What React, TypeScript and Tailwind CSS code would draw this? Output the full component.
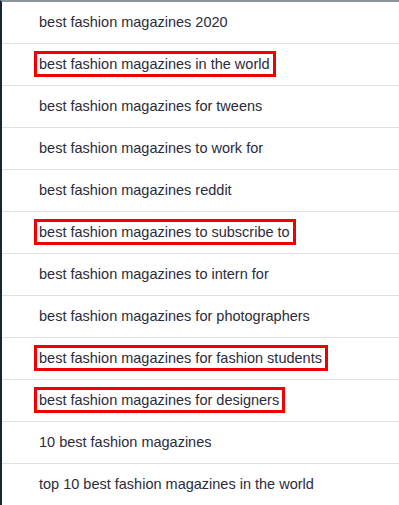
import React from "react";

const rows: { t: string; hl?: boolean }[] = [
  { t: "best fashion magazines 2020" },
  { t: "best fashion magazines in the world", hl: true },
  { t: "best fashion magazines for tweens" },
  { t: "best fashion magazines to work for" },
  { t: "best fashion magazines reddit" },
  { t: "best fashion magazines to subscribe to", hl: true },
  { t: "best fashion magazines to intern for" },
  { t: "best fashion magazines for photographers" },
  { t: "best fashion magazines for fashion students", hl: true },
  { t: "best fashion magazines for designers", hl: true },
  { t: "10 best fashion magazines" },
  { t: "top 10 best fashion magazines in the world" },
];

export default function App() {
  return (
    <div
      className="w-[399px] h-[505px] overflow-hidden bg-white border-l-2 border-[#1b2436] border-t-2 border-t-[#8c949c]"
      style={{ fontFamily: '"Liberation Sans", Arial, sans-serif' }}
    >
      {rows.map((r, i) => (
        <div
          key={i}
          className="h-[42px] flex items-center pl-[37px] pb-[2px] border-b border-[#dde2e4] text-[14.5px] text-[#2b2b3a]"
        >
          {r.hl ? (
            <span className="ml-[-5px] border-[3px] border-[#f20000] pl-[2px] pr-[3px] leading-[20px]">
              {r.t}
            </span>
          ) : (
            <span className="leading-[20px]">{r.t}</span>
          )}
        </div>
      ))}
    </div>
  );
}
